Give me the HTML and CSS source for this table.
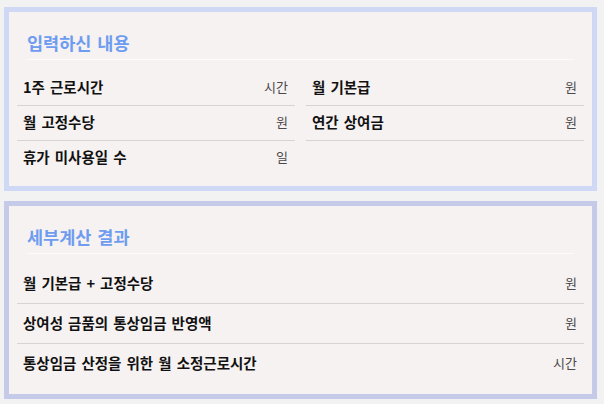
FILE: index.html
```html
<!DOCTYPE html>
<html lang="ko">
<head>
<meta charset="utf-8">
<title>통상임금 계산</title>
<link rel="stylesheet" href="styles.css">
</head>
<body>
  <section class="card card-input">
    <h2 class="card-title">입력하신 내용</h2>
    <div class="cols">
      <div class="col">
        <div class="row"><span class="label">1주 근로시간</span><span class="unit">시간</span></div>
        <div class="row"><span class="label">월 고정수당</span><span class="unit">원</span></div>
        <div class="row row-last"><span class="label">휴가 미사용일 수</span><span class="unit">일</span></div>
      </div>
      <div class="col">
        <div class="row"><span class="label">월 기본급</span><span class="unit">원</span></div>
        <div class="row"><span class="label">연간 상여금</span><span class="unit">원</span></div>
      </div>
    </div>
  </section>
  <section class="card card-result">
    <h2 class="card-title">세부계산 결과</h2>
    <div class="list">
      <div class="row row-tall"><span class="label">월 기본급 + 고정수당</span><span class="unit">원</span></div>
      <div class="row row-tall"><span class="label">상여성 금품의 통상임금 반영액</span><span class="unit">원</span></div>
      <div class="row row-tall row-last"><span class="label">통상임금 산정을 위한 월 소정근로시간</span><span class="unit">시간</span></div>
    </div>
  </section>
</body>
</html>
```

FILE: styles.css
```css
html, body {
  background: #f2f2f2;
}
body {
  margin: 7px 7px 5px 4px;
  font-family: "Noto Sans CJK KR", "Noto Sans", sans-serif;
  color: #111;
}
.card {
  background: #f7f2f2;
  border: 5px solid #cfd8f5;
  padding: 19px 8px 11px 8px;
}
.card-result {
  margin-top: 10px;
  border-color: #c5cae9;
}
.card-title {
  margin: 0 10px 11px 10px;
  padding: 0 0 4px 0;
  font-size: 17.5px;
  line-height: 24px;
  font-weight: 700;
  color: #6d9cf0;
  word-spacing: 1px;
  border-bottom: 1px solid #fcfafa;
}
.card-result .card-title {
  margin-bottom: 10px;
}
.cols {
  display: grid;
  grid-template-columns: 1fr 1fr;
  column-gap: 11px;
  align-items: start;
}
.row {
  display: flex;
  justify-content: space-between;
  align-items: center;
  height: 32px;
  padding: 0 7px 2px 6px;
  border-bottom: 1px solid #d6d3d3;
}
.row-tall {
  height: 37px;
}
.row-last {
  border-bottom: none;
}
.label {
  font-size: 14.5px;
  font-weight: 700;
  line-height: 20px;
  word-spacing: 1px;
  color: #111;
}
.unit {
  font-size: 13px;
  line-height: 20px;
  color: #4a4a4a;
}
```
